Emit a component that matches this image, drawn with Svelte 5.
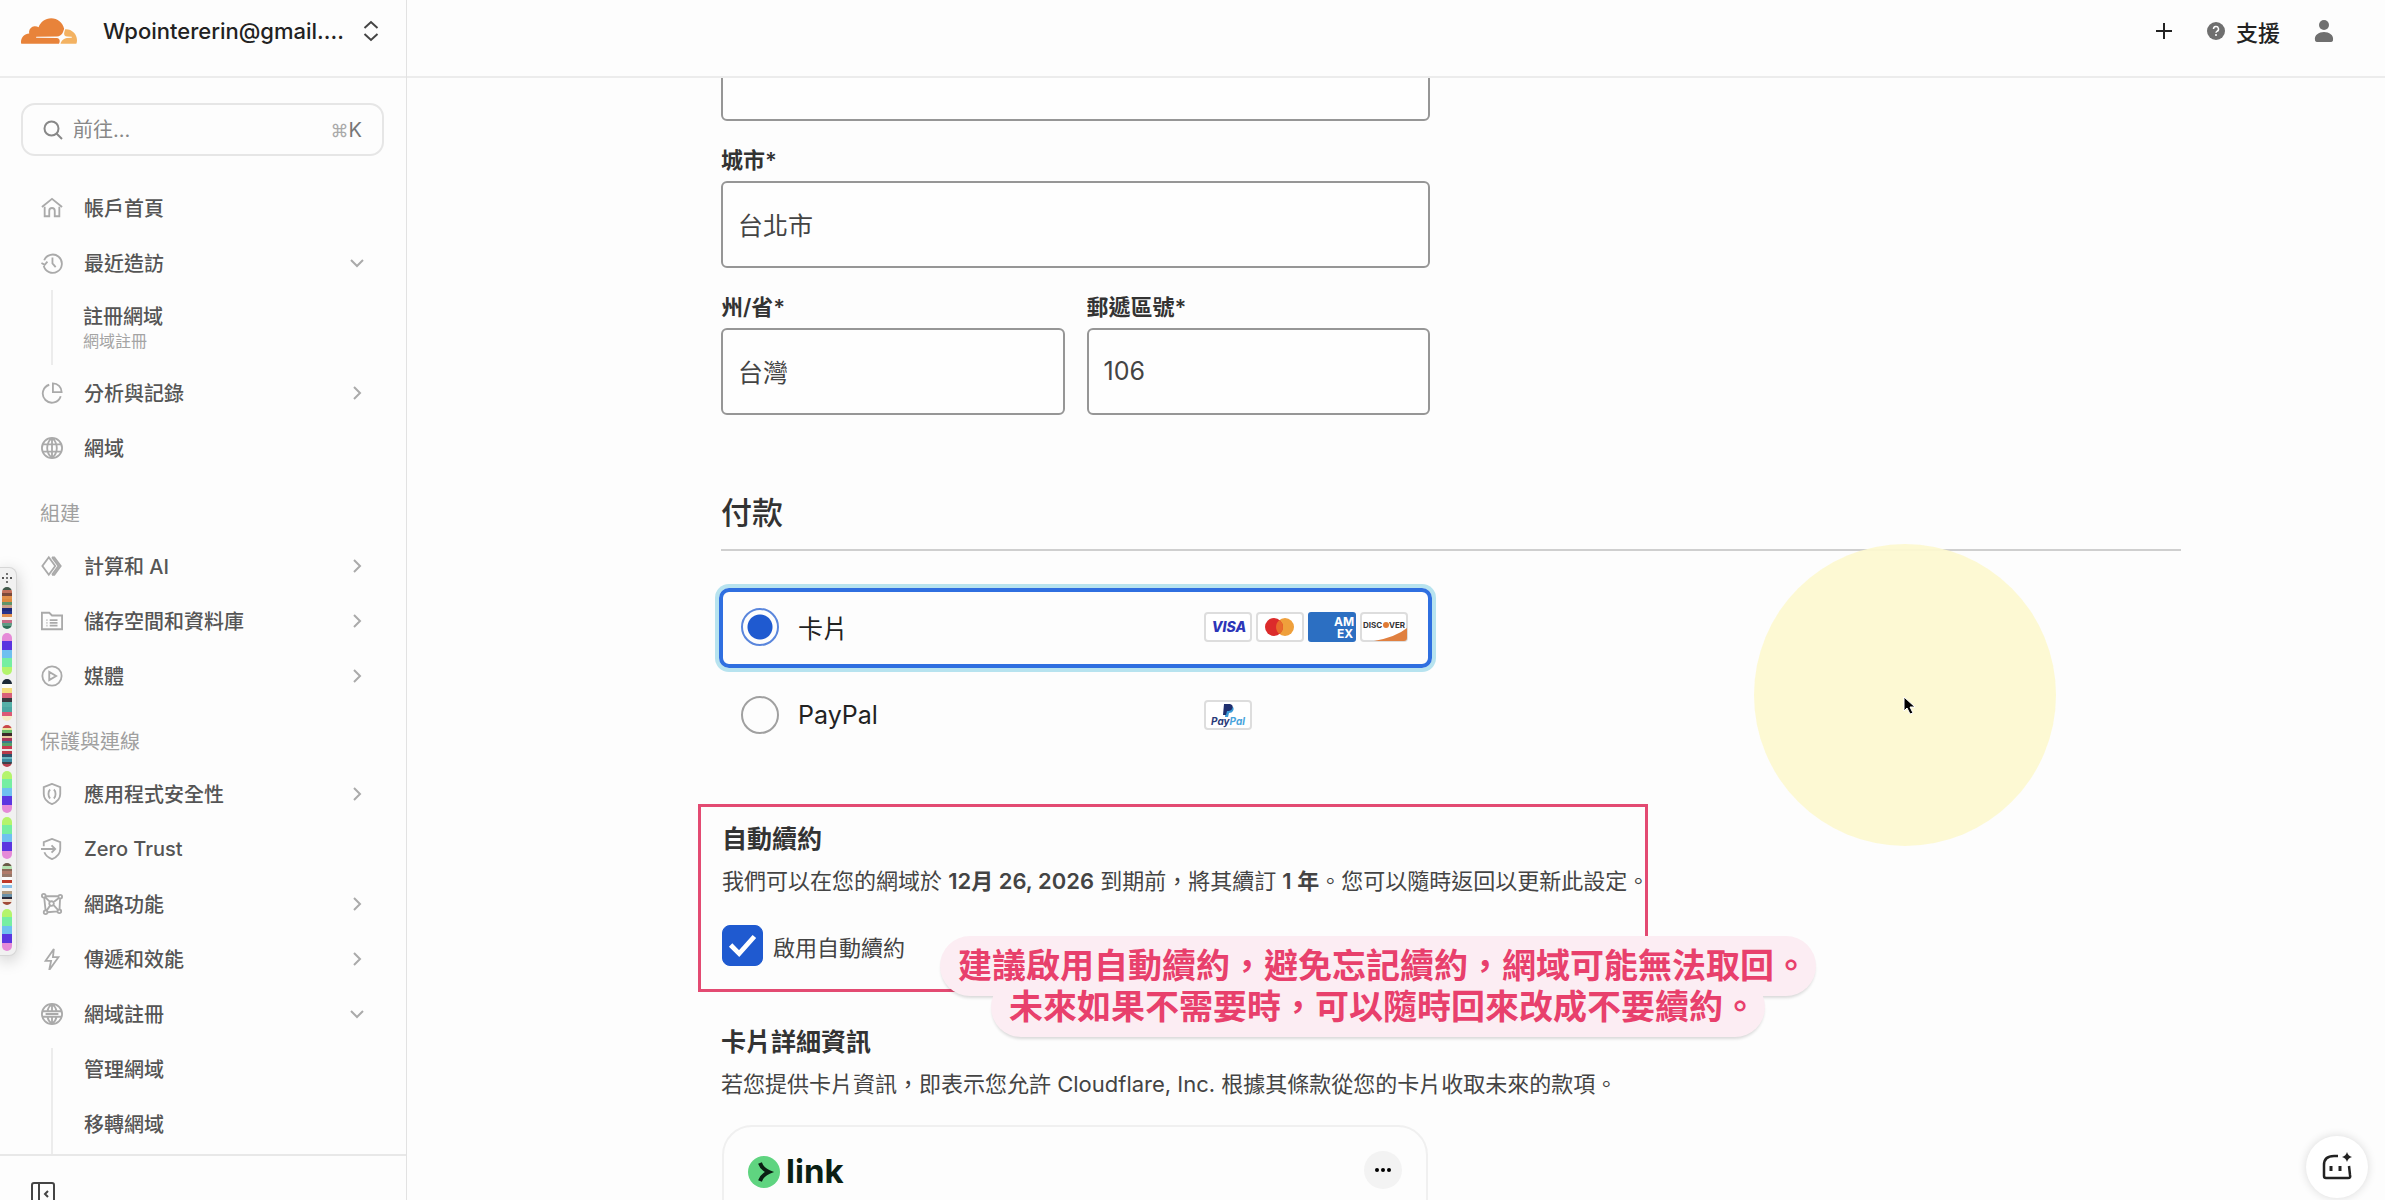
<script>
    const icons = {
        home: 'M1 11 12 2l11 9M4 10.500V21h5v-6a3 3 0 0 1 6 0v6h5V10.500',
        recent: 'M3.500 9A10 10 0 1 1 3 15M.5 12l3.500 2 3-3.500M12.500 6v6.500l3.500 4',
        chart: 'M9 3a10 10 0 1 0 12.500 12.500M13 1.500V11h9.500A9.500 9.500 0 0 0 13 1.500z',
        globe: 'M1 12a11 11 0 1 0 22 0 11 11 0 1 0-22 0M12 1c-7 6-7 16 0 22M12 1c7 6 7 16 0 22M12 1v22M2 8h20M2 16h20',
        compute: 'M8.500 2.500 1.500 12l7 9.500 7-9.500zM12 2.500h2.500L21.500 12l-7 9.500H12M12 2.500 19 12l-7 9.500',
        storage: 'M1 21V3h8l3 3h11v15zM6 11h1M6 14h1M6 17h1M9.500 11H18M9.500 14H18M9.500 17H18',
        media: 'M1.500 12a10.500 10.500 0 1 0 21 0 10.500 10.500 0 1 0-21 0M9 7.500v9l7.500-4.500z',
        shield: 'M12 1 3 4.500V12c0 5.500 4 9 9 11 5-2 9-5.500 9-11V4.500zM10 7c-2.500 2-2.500 8 0 10M14 7c2.500 2 2.500 8 0 10',
        zero: 'M3 9V4.500L12 1l9 3.500V12c0 5.500-4 9-9 11-4-1.600-7-4-8.300-7.500M0 12h15M11.500 8l4 4-4 4',
        network: 'M1 3a2 2 0 1 0 4 0 2 2 0 1 0-4 0M19 4a2 2 0 1 0 4 0 2 2 0 1 0-4 0M9 11.500a2.500 2.500 0 1 0 5 0 2.500 2.500 0 1 0-5 0M3 21a2 2 0 1 0 4 0 2 2 0 1 0-4 0M18 20a2 2 0 1 0 4 0 2 2 0 1 0-4 0M5 3.500l14 0M3.500 5l1.500 14M20.800 6l-.6 12M7 21l11-1M4.500 4.500l5 5M19.500 5.500l-6 4.500M6 19.500l4-6M18.500 18.500l-5-5.500',
        bolt: 'M14 1 5 14h6l-2 10 10-14h-6z',
        registrar: 'M1 12a11 11 0 1 0 22 0 11 11 0 1 0-22 0M12 1c-3 2.500-4.500 5-5 8M12 1c3 2.500 4.500 5 5 8M12 23c-3-2.500-4.500-5-5-8M12 23c3-2.500 4.500-5 5-8M12 1v8M12 15v8M2 9h20M2 15h20M5 12h14'
    };

    const groups = [
        {
            title: '',
            items: [
                { label: '帳戶首頁', icon: 'home' },
                {
                    label: '最近造訪',
                    icon: 'recent',
                    open: true,
                    recent: { label: '註冊網域', note: '網域註冊' }
                },
                { label: '分析與記錄', icon: 'chart', more: true },
                { label: '網域', icon: 'globe' }
            ]
        },
        {
            title: '組建',
            items: [
                { label: '計算和 AI', icon: 'compute', more: true },
                { label: '儲存空間和資料庫', icon: 'storage', more: true },
                { label: '媒體', icon: 'media', more: true }
            ]
        },
        {
            title: '保護與連線',
            items: [
                { label: '應用程式安全性', icon: 'shield', more: true },
                { label: 'Zero Trust', icon: 'zero' },
                { label: '網路功能', icon: 'network', more: true },
                { label: '傳遞和效能', icon: 'bolt', more: true },
                {
                    label: '網域註冊',
                    icon: 'registrar',
                    open: true,
                    children: ['管理網域', '移轉網域']
                }
            ]
        }
    ];

    const neon = ['#e58ad8', '#5b36e0', '#6fc0f0', '#76eea2', '#b4f46c'];
    const neonUp = [...neon].reverse();
    const swatches = [
        ['#40584a', '#c4705a', '#7c4a3a', '#e2904a', '#dd8a40', '#5f9468', '#c9a08a', '#1d2a78', '#26348c', '#e09050', '#f4f0ea', '#c76a86', '#5f9a84', '#2f6e58'],
        neon,
        ['#1c2836', '#fbfbf4', '#f3dc7c', '#d8607a', '#3a3a40', '#56b0a8', '#4ca6a2', '#dc5a76', '#f6ecc4'],
        ['#c94848', '#e9e6a0', '#68b868', '#3a2a2a', '#e8c8a0', '#a8365a', '#3a7a8a', '#56a068', '#c83a50', '#e8e8e8', '#b83a4a', '#30506a', '#68b4c0', '#3a8aa0', '#404048', '#b84050'],
        neonUp,
        neonUp,
        ['#6a5a48', '#b4e0b0', '#8a6a5a', '#b07a6a', '#96786a', '#fafafa', '#c03a2a', '#fafafa', '#8ac0e8', '#f4f4f4', '#b09a80', '#6a90a8', '#2a2a3a', '#f0e0d0', '#a04a3a'],
        neonUp
    ];

    const bands = (colors) => {
        const size = 100 / colors.length;
        return colors.map((c, i) => `${c} ${i * size}% ${(i + 1) * size}%`).join(', ');
    };

    let city = '台北市';
    let region = '台灣';
    let zip = '106';
    let address = '';
    let search = '';
    let method = 'card';
    let autoRenew = true;
</script>

<div class="app" lang="zh-Hant">
    <aside class="sidebar">
        <div class="account">
            <svg class="logo" viewBox="0 6.500 24 11" aria-hidden="true">
                <path fill="#e8833a" d="M16.5088 16.8447c.1475-.5068.0908-.9707-.1553-1.3154-.2246-.3164-.6045-.499-1.0615-.5205l-8.6592-.1123a.1559.1559 0 0 1-.1333-.0713c-.0283-.042-.0351-.0986-.021-.1553.0278-.084.1123-.1484.2036-.1562l8.7359-.1123c1.0351-.0489 2.1601-.8868 2.5537-1.9136l.499-1.3013c.0215-.0561.0293-.1128.0147-.168-.5625-2.5463-2.835-4.4453-5.5499-4.4453-2.5039 0-4.6284 1.6177-5.3876 3.8614-.4927-.3658-1.1187-.5625-1.794-.499-1.2026.119-2.1665 1.083-2.2861 2.2856-.0283.31-.0069.6128.0635.894C1.5683 13.171 0 14.7754 0 16.752c0 .1748.0142.3515.0352.5273.0141.083.0844.1475.1689.1475h15.9814c.0909 0 .1758-.0645.2032-.1553z" />
                <path fill="#f3b262" d="M19.2656 11.2813c-.0771 0-.1611 0-.2383.0112-.0566 0-.1054.0415-.127.0976l-.3378 1.1744c-.1475.5068-.0918.9707.1543 1.3164.2256.3164.6055.498 1.0625.5195l1.8437.1133c.0557 0 .1055.0263.1329.0703.0283.043.0351.1074.0214.1562-.0283.084-.1132.1485-.204.1553l-1.921.1123c-1.041.0488-2.1582.8867-2.5527 1.914l-.1406.3585c-.0283.0713.0215.1416.0986.1416h6.5977c.0771 0 .1474-.0489.169-.126.1122-.4082.1757-.837.1757-1.2803 0-2.6025-2.125-4.727-4.7344-4.727" />
            </svg>
            <button type="button" class="switcher">
                <span>Wpointererin@gmail....</span>
                <svg viewBox="0 0 16 22" width="16" height="22" aria-hidden="true">
                    <path d="M1.500 8 8 2l6.500 6M1.500 14 8 20l6.500-6" />
                </svg>
            </button>
        </div>

        <label class="search">
            <svg viewBox="0 0 20 20" width="20" height="20" aria-hidden="true">
                <circle cx="8.500" cy="8.500" r="7" />
                <path d="m13.500 13.500 5.500 5.500" />
            </svg>
            <input type="text" bind:value={search} placeholder="前往..." aria-label="前往" />
            <kbd><span>⌘</span>K</kbd>
        </label>

        <nav>
            {#each groups as group}
                {#if group.title}
                    <h3>{group.title}</h3>
                {/if}
                <ul>
                    {#each group.items as item}
                        <li>
                            <a class="item" href="#top">
                                <svg class="icon" viewBox="0 0 24 24" aria-hidden="true">
                                    <path d={icons[item.icon]} />
                                </svg>
                                <span>{item.label}</span>
                                {#if item.more}
                                    <svg class="chevron" viewBox="0 0 14 14" aria-hidden="true"><path d="m4 1 6 6-6 6" /></svg>
                                {:else if item.open}
                                    <svg class="chevron" viewBox="0 0 14 14" aria-hidden="true"><path d="m1 4 6 6 6-6" /></svg>
                                {/if}
                            </a>
                            {#if item.recent}
                                <a class="recent" href="#top">
                                    <span>{item.recent.label}</span>
                                    <small>{item.recent.note}</small>
                                </a>
                            {/if}
                            {#if item.children}
                                <ul class="children">
                                    {#each item.children as child}
                                        <li><a href="#top">{child}</a></li>
                                    {/each}
                                </ul>
                            {/if}
                        </li>
                    {/each}
                </ul>
            {/each}
        </nav>

        <div class="foot">
            <button type="button" aria-label="收合側邊欄">
                <svg viewBox="0 0 24 24" width="24" height="24">
                    <rect x="1" y="1" width="22" height="22" rx="2" />
                    <path d="M8 1v22M17 9l-3 3 3 3" />
                </svg>
            </button>
        </div>
    </aside>

    <div class="page">
        <header>
            <button type="button" aria-label="新增">
                <svg viewBox="0 0 18 18" width="18" height="18"><path d="M9 1v16M1 9h16" stroke="#222" stroke-width="2" /></svg>
            </button>
            <button type="button" class="support">
                <svg viewBox="0 0 18 18" width="18" height="18" aria-hidden="true">
                    <circle cx="9" cy="9" r="9" fill="#6f6f6f" />
                    <path d="M6.500 7a2.500 2.500 0 1 1 3.500 2.300c-.8.400-1 .7-1 1.500" fill="none" stroke="#fff" stroke-width="1.500" />
                    <circle cx="9" cy="13" r="1" fill="#fff" />
                </svg>
                支援
            </button>
            <button type="button" aria-label="使用者">
                <svg viewBox="0 0 20 24" width="20" height="24" fill="#6f6f6f">
                    <circle cx="10" cy="6" r="5" />
                    <path d="M1 21c-1-5 4-8 9-8s10 3 9 8q0 2-3 2H4q-3 0-3-2z" />
                </svg>
            </button>
        </header>

        <main>
            <form>
                <div class="fields">
                    <input type="text" bind:value={address} aria-label="地址" />
                    <div class="field">
                        <label for="city">城市*</label>
                        <input id="city" type="text" bind:value={city} />
                    </div>
                    <div class="pair">
                        <div class="field">
                            <label for="region">州/省*</label>
                            <input id="region" type="text" bind:value={region} />
                        </div>
                        <div class="field">
                            <label for="zip">郵遞區號*</label>
                            <input id="zip" type="text" bind:value={zip} />
                        </div>
                    </div>
                </div>

                <h1>付款</h1>

                <div class="methods">
                    <label class="method" class:selected={method === 'card'}>
                        <input type="radio" name="method" value="card" bind:group={method} />
                        <span>卡片</span>
                        <span class="brands" aria-hidden="true">
                            <svg viewBox="0 0 48 30">
                                <rect x="1" y="1" width="46" height="28" rx="3" fill="#fff" stroke="#ddd" stroke-width="2" />
                                <text x="25" y="20" text-anchor="middle" font-size="14" font-weight="800" font-style="italic" fill="#2c35b8">VISA</text>
                            </svg>
                            <svg viewBox="0 0 48 30">
                                <rect x="1" y="1" width="46" height="28" rx="3" fill="#fff" stroke="#ddd" stroke-width="2" />
                                <circle cx="29" cy="15" r="9" fill="#efa03c" />
                                <circle cx="18" cy="15" r="9" fill="#dc2b2b" />
                                <path d="M23.500 7.900a9 9 0 0 1 0 14.200 9 9 0 0 1 0-14.200z" fill="#e86a2c" />
                            </svg>
                            <svg viewBox="0 0 48 30">
                                <rect width="48" height="30" rx="3" fill="#2c6fc2" />
                                <g font-size="12" font-weight="700" fill="#fff">
                                    <text x="26" y="14">AM</text>
                                    <text x="29" y="26">EX</text>
                                </g>
                            </svg>
                            <svg viewBox="0 0 48 30">
                                <rect x="1" y="1" width="46" height="28" rx="3" fill="#fff" stroke="#ddd" stroke-width="2" />
                                <path d="M14 29Q36 25 47 16v10q0 3-3 3z" fill="#e08040" />
                                <text x="3" y="16" font-size="8" font-weight="700" fill="#333">DISC</text>
                                <circle cx="26" cy="13" r="3" fill="#e07a34" />
                                <text x="29" y="16" font-size="8" font-weight="700" fill="#333">VER</text>
                            </svg>
                        </span>
                    </label>
                    <label class="method" class:selected={method === 'paypal'}>
                        <input type="radio" name="method" value="paypal" bind:group={method} />
                        <span>PayPal</span>
                        <span class="brands" aria-hidden="true">
                            <svg viewBox="0 0 48 30">
                                <rect x="1" y="1" width="46" height="28" rx="3" fill="#fff" stroke="#ddd" stroke-width="2" />
                                <path d="M22 6h5q4 1 2 5-1 2-4 2l-1 4h-3z" fill="#3a9bd8" />
                                <path d="M20 4h6q4 1 2 5-1 2-5 2l-1 4h-3z" fill="#1f2f6e" />
                                <text x="24" y="25" text-anchor="middle" font-size="10" font-weight="700" font-style="italic"><tspan fill="#2a3a78">Pay</tspan><tspan fill="#48a4dc">Pal</tspan></text>
                            </svg>
                        </span>
                    </label>
                </div>

                <section class="renew">
                    <h2>自動續約</h2>
                    <p>我們可以在您的網域於 <b>12月 26, 2026</b> 到期前，將其續訂 <b>1 年</b>。您可以隨時返回以更新此設定。</p>
                    <label class="check">
                        <input type="checkbox" bind:checked={autoRenew} />
                        啟用自動續約
                    </label>
                    <div class="tip">
                        <span>建議啟用自動續約，避免忘記續約，網域可能無法取回。</span>
                        <span>未來如果不需要時，可以隨時回來改成不要續約。</span>
                    </div>
                </section>

                <section class="details">
                    <h2>卡片詳細資訊</h2>
                    <p>若您提供卡片資訊，即表示您允許 Cloudflare, Inc. 根據其條款從您的卡片收取未來的款項。</p>
                    <div class="link-box">
                        <svg viewBox="0 0 32 32" width="32" height="32" aria-hidden="true">
                            <circle cx="16" cy="16" r="16" fill="#5fd480" />
                            <path d="M12 7q2 6 9 9-7 3-9 9" fill="none" stroke="#0b1f14" stroke-width="4" />
                        </svg>
                        <span>link</span>
                        <button type="button" aria-label="更多選項">
                            <svg viewBox="0 0 18 4" width="18" height="4"><circle cx="3" cy="2" r="2" /><circle cx="9" cy="2" r="2" /><circle cx="15" cy="2" r="2" /></svg>
                        </button>
                    </div>
                </section>
            </form>
        </main>
    </div>

    <div class="palette">
        <svg viewBox="0 0 10 10" width="10" height="10" aria-hidden="true">
            <path fill="#555" d="M4.200 0h1.600v2H4.200zM4.200 4h1.600v2H4.200zM4.200 8h1.600v2H4.200zM0 4h2v2H0zM8 4h2v2H8z" />
        </svg>
        {#each swatches as colors}
            <i style="background: linear-gradient({bands(colors)})"></i>
        {/each}
    </div>

    <div class="spotlight">
        <svg viewBox="0 0 14 20" width="14" height="20" aria-hidden="true">
            <path d="M1 1v14l3-3 3 6 3-1-3-6h5z" stroke="#fff" stroke-width="1" />
        </svg>
    </div>

    <button type="button" class="chat" aria-label="助理">
        <svg viewBox="0 0 32 30" width="32" height="30">
            <path d="M17 4h-4Q3 4 3 13v11q0 2 2 2h22q3 0 2-3l-1-9" fill="none" stroke="#222" stroke-width="2.500" />
            <path d="M10 14v5M19 14v5" stroke="#222" stroke-width="3" />
            <path d="M26 0q1 4 5 5-4 1-5 5-1-4-5-5 4-1 5-5z" fill="#222" />
        </svg>
    </button>
</div>

<style>
    :global(body) {
        margin: 0;
        background: #fdfdfd;
    }

    .app {
        position: relative;
        display: flex;
        height: 100vh;
        overflow: hidden;
        background: #fdfdfd;
        color: #333;
        font-family: Inter, 'Noto Sans CJK TC', sans-serif;
        font-size: 22px;
    }

    .app * {
        box-sizing: border-box;
    }

    button {
        display: flex;
        align-items: center;
        padding: 0;
        border: 0;
        background: none;
        color: inherit;
        font: inherit;
    }

    a {
        color: inherit;
        text-decoration: none;
    }

    ul {
        margin: 0;
        padding: 0;
        list-style: none;
    }

    h1,
    h2,
    h3,
    p {
        margin: 0;
    }

    .sidebar {
        display: flex;
        flex: 0 0 407px;
        flex-direction: column;
        min-width: 0;
        border-right: 1px solid #e2e2e2;
    }

    .account {
        display: flex;
        align-items: center;
        gap: 26px;
        height: 78px;
        padding: 0 27px 14px 21px;
        border-bottom: 2px solid #ececec;
    }

    .logo {
        flex: none;
        width: 56px;
        height: 26px;
    }

    .switcher {
        flex: 1;
        justify-content: space-between;
        color: #222;
        font-size: 22px;
        font-weight: 500;
    }

    .switcher svg {
        flex: none;
        fill: none;
        stroke: #444;
        stroke-width: 2;
    }

    .search {
        display: flex;
        flex: none;
        align-items: center;
        gap: 10px;
        height: 53px;
        margin: 25px 22px 24px 21px;
        padding: 0 20px;
        border: 2px solid #e6e6e6;
        border-radius: 14px;
        color: #777;
    }

    .search svg {
        flex: none;
        fill: none;
        stroke: #888;
        stroke-width: 2;
    }

    .search input {
        flex: 1;
        min-width: 0;
        padding: 0;
        border: 0;
        background: none;
        font: inherit;
        font-size: 20px;
    }

    .search input::placeholder {
        color: #888;
    }

    kbd {
        font: inherit;
        font-size: 20px;
    }

    kbd span {
        color: #aaa;
        font-size: 18px;
    }

    nav {
        flex: 1;
        min-height: 0;
        overflow: hidden;
        color: #555;
        font-size: 20px;
        font-weight: 500;
    }

    nav h3 {
        padding: 23px 40px 8px;
        color: #a0a0a0;
        font-size: 20px;
        font-weight: 400;
        line-height: 32px;
    }

    .item {
        display: flex;
        align-items: center;
        gap: 21px;
        height: 55px;
        padding: 0 42px 0 41px;
    }

    .icon {
        width: 22px;
        height: 22px;
        fill: none;
        stroke: #aaa;
        stroke-width: 2;
    }

    .chevron {
        width: 14px;
        height: 14px;
        margin-left: auto;
        fill: none;
        stroke: #aaa;
        stroke-width: 2;
    }

    .recent {
        display: flex;
        flex-direction: column;
        justify-content: center;
        height: 75px;
        margin-left: 51px;
        padding-left: 30px;
        border-left: 2px solid #ececec;
        line-height: 26px;
    }

    .recent small {
        color: #a4a4a4;
        font-size: 16px;
        font-weight: 400;
        line-height: 22px;
    }

    .children {
        display: flex;
        flex-direction: column;
        gap: 14px;
        margin: 7px 0 0 51px;
        padding-bottom: 14px;
        border-left: 2px solid #ececec;
    }

    .children a {
        display: flex;
        align-items: center;
        height: 41px;
        padding-left: 31px;
    }

    .foot {
        flex: 0 0 46px;
        padding: 26px 31px 0;
        overflow: hidden;
        border-top: 2px solid #e8e8e8;
    }

    .foot svg {
        fill: none;
        stroke: #444;
        stroke-width: 2;
    }

    .page {
        display: flex;
        flex: 1;
        flex-direction: column;
        min-width: 0;
    }

    header {
        display: flex;
        flex: 0 0 78px;
        align-items: center;
        justify-content: flex-end;
        gap: 34px;
        padding: 0 51px 14px 0;
        border-bottom: 2px solid #ececec;
    }

    .support {
        gap: 11px;
        color: #222;
        font-size: 22px;
        font-weight: 500;
    }

    main {
        flex: 1;
        min-height: 0;
        padding: 0 204px 0 314px;
        overflow: hidden;
    }

    /* the form sits scrolled under the header */
    form {
        margin-top: -44px;
    }

    .fields {
        display: flex;
        flex-direction: column;
        gap: 24px;
        max-width: 709px;
    }

    .pair {
        display: flex;
        gap: 22px;
    }

    .field {
        display: flex;
        flex: 1;
        flex-direction: column;
        gap: 6px;
        min-width: 0;
    }

    .field label {
        font-size: 22px;
        font-weight: 600;
        line-height: 30px;
    }

    .fields input {
        width: 100%;
        height: 87px;
        padding: 0 15px 2px;
        border: 2px solid #969696;
        border-radius: 6px;
        background: #fefefe;
        color: #444;
        font: inherit;
        font-size: 25px;
    }

    h1 {
        margin-top: 76px;
        padding-bottom: 14px;
        border-bottom: 2px solid #cfcfcf;
        font-size: 31px;
        font-weight: 500;
        line-height: 44px;
    }

    .methods {
        display: flex;
        flex-direction: column;
        gap: 8px;
        max-width: 713px;
        margin: 37px 0 0 -2px;
    }

    .method {
        display: flex;
        align-items: center;
        gap: 19px;
        height: 80px;
        padding: 0 20px 2px 18px;
        border: 4px solid transparent;
        border-radius: 10px;
        color: #222;
        font-size: 25px;
    }

    .method.selected {
        border-color: #2f6fe0;
        box-shadow: 0 0 0 4px #b7e3ef;
    }

    .method input {
        width: 38px;
        height: 38px;
        margin: 0;
        border: 2px solid #a0a0a0;
        border-radius: 50%;
        appearance: none;
    }

    .method input:checked {
        border-color: #5a86dc;
        background: radial-gradient(circle, #1f5ad0 12px, transparent 13px);
    }

    .brands {
        display: flex;
        gap: 4px;
        width: 204px;
        margin-left: auto;
    }

    .brands svg {
        width: 48px;
        height: 30px;
    }

    .renew {
        position: relative;
        max-width: 950px;
        margin: 48px 0 0 -23px;
        padding: 14px 21px 23px;
        border: 3px solid #e34a72;
    }

    h2 {
        font-size: 25px;
        font-weight: 600;
        line-height: 36px;
    }

    p {
        margin-top: 8px;
        color: #444;
        line-height: 32px;
        white-space: nowrap;
    }

    b {
        font-weight: 600;
    }

    .check {
        display: flex;
        align-items: center;
        gap: 10px;
        margin-top: 28px;
        color: #444;
    }

    .check input {
        width: 41px;
        height: 41px;
        margin: 0;
        border: 1px solid #1f5ad0;
        border-radius: 8px;
        appearance: none;
    }

    .check input:checked {
        background: #1f5ad0 url("data:image/svg+xml,%3Csvg xmlns='http://www.w3.org/2000/svg' viewBox='0 0 41 41'%3E%3Cpath d='m8 20 9 9 16-18' fill='none' stroke='white' stroke-width='5'/%3E%3C/svg%3E") center / cover;
    }

    .tip {
        position: absolute;
        top: 129px;
        left: 239px;
        display: flex;
        flex-direction: column;
        align-items: center;
        isolation: isolate;
        color: #e8406c;
        font-size: 34px;
        font-weight: 700;
        line-height: 60px;
        white-space: nowrap;
    }

    .tip span {
        position: relative;
        padding: 0 8px 0 18px;
    }

    .tip span + span {
        margin-top: -19px;
    }

    /* both pills stay behind both lines of text */
    .tip span::before {
        position: absolute;
        inset: 0;
        z-index: -1;
        border-radius: 30px;
        background: #fcedf3;
        box-shadow: 0 3px 3px -1px rgba(0, 0, 0, 0.14);
        content: '';
    }

    .details {
        margin-top: 32px;
    }

    .link-box {
        display: flex;
        align-items: flex-start;
        gap: 6px;
        max-width: 706px;
        height: 160px;
        margin: 25px 0 0 1px;
        padding: 24px;
        border: 2px solid #f0f0f0;
        border-radius: 30px;
    }

    .link-box > svg {
        margin-top: 5px;
    }

    .link-box span {
        color: #0b1f14;
        font-size: 33px;
        font-weight: 700;
        line-height: 40px;
    }

    .link-box button {
        justify-content: center;
        width: 38px;
        height: 38px;
        margin-left: auto;
        border-radius: 50%;
        background: #f3f3f3;
    }

    .palette {
        position: absolute;
        top: 567px;
        left: 0;
        display: flex;
        flex-direction: column;
        align-items: center;
        gap: 4px;
        width: 17px;
        padding: 5px 5px 4px 2px;
        border: 1px solid #d6d6d6;
        border-left: 0;
        border-radius: 0 8px 8px 0;
        background: #f1f1f1;
        box-shadow: 0 4px 16px rgba(0, 0, 0, 0.22);
    }

    .palette i {
        width: 10px;
        height: 42px;
        border-radius: 5px;
    }

    .spotlight {
        position: absolute;
        top: 544px;
        left: 1754px;
        display: grid;
        place-items: center;
        width: 302px;
        height: 302px;
        padding: 22px 0 0 10px;
        border-radius: 50%;
        background: rgba(253, 249, 208, 0.93);
        pointer-events: none;
    }

    .chat {
        position: absolute;
        right: 17px;
        bottom: 2px;
        justify-content: center;
        width: 62px;
        height: 62px;
        border-radius: 50%;
        background: #fff;
        box-shadow: 0 0 10px rgba(0, 0, 0, 0.14);
    }
</style>
